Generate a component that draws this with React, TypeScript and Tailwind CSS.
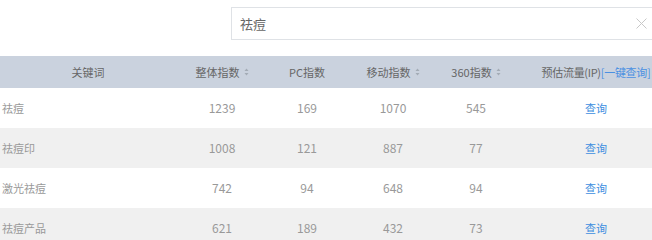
import React from "react";

const rows = [
  { k: "祛痘", a: 1239, pc: 169, m: 1070, s: 545 },
  { k: "祛痘印", a: 1008, pc: 121, m: 887, s: 77 },
  { k: "激光祛痘", a: 742, pc: 94, m: 648, s: 94 },
  { k: "祛痘产品", a: 621, pc: 189, m: 432, s: 73 },
];

function Sort() {
  return (
    <svg width="5" height="8" viewBox="0 0 5 8" className="ml-[4px] inline-block">
      <path d="M2.5 0.5 L4.5 3 L0.5 3 Z" fill="#a3abb5" />
      <path d="M2.5 7.5 L4.5 5 L0.5 5 Z" fill="#a3abb5" />
    </svg>
  );
}

export default function App() {
  return (
    <div
      className="w-[652px] h-[240px] overflow-hidden bg-white"
      style={{ fontFamily: '"Noto Sans CJK SC", "Noto Sans", sans-serif' }}
    >
      <div className="h-[56px] pt-[7px] pl-[231px]">
        <div className="w-[440px] h-[33px] border border-[#dfe2e6] flex items-center pl-[8px] text-[13px] text-[#666]">
          <span>祛痘</span>
          <span className="ml-[370px]">
            <svg width="11" height="11" viewBox="0 0 11 11">
              <path d="M0.5 0.5 L10.5 10.5 M10.5 0.5 L0.5 10.5" stroke="#c8c8c8" strokeWidth="1" />
            </svg>
          </span>
        </div>
      </div>
      <div className="w-[700px]">
        <div className="flex h-[32px] items-center bg-[#cad2de] text-[11px] text-[#666]">
          <div className="w-[176px] text-center">关键词</div>
          <div className="w-[92px] text-center flex items-center justify-center">整体指数<Sort /></div>
          <div className="w-[78px] text-center">PC指数</div>
          <div className="w-[94px] text-center flex items-center justify-center">移动指数<Sort /></div>
          <div className="w-[72px] text-center flex items-center justify-center">360指数<Sort /></div>
          <div className="w-[168px] text-center tracking-[-0.3px]">
            预估流量(IP)<span className="text-[#4a90e2]">[一键查询]</span>
          </div>
        </div>
        {rows.map((r, i) => (
          <div
            key={r.k}
            className={`flex h-[40px] items-center text-[11px] text-[#999] ${i % 2 === 1 ? "bg-[#f0f0f0]" : "bg-white"}`}
          >
            <div className="w-[176px] pl-[2px]">{r.k}</div>
            <div className="w-[92px] text-center text-[12px]">{r.a}</div>
            <div className="w-[78px] text-center text-[12px]">{r.pc}</div>
            <div className="w-[94px] text-center text-[12px]">{r.m}</div>
            <div className="w-[72px] text-center text-[12px]">{r.s}</div>
            <div className="w-[168px] text-center text-[#3d8ee0]">查询</div>
          </div>
        ))}
      </div>
    </div>
  );
}
